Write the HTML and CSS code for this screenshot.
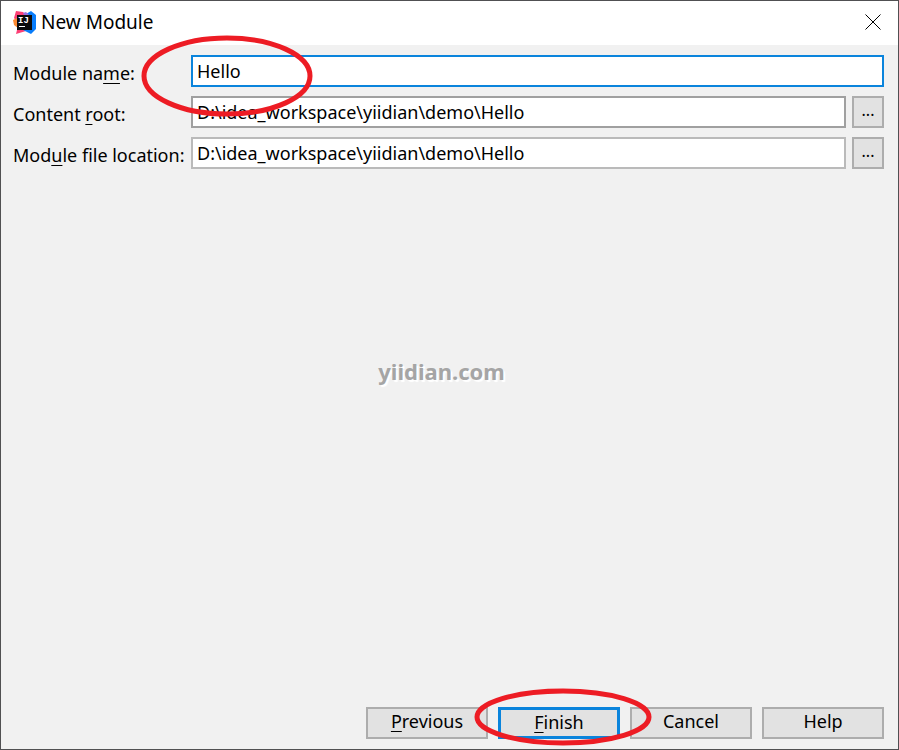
FILE: index.html
```html
<!DOCTYPE html>
<html lang="en">

<head>
    <meta charset="UTF-8">
    <meta name="viewport" content="width=device-width, initial-scale=1.0">
    <title>New Module</title>
    <link rel="stylesheet" href="styles.css">
</head>

<body>
    <div class="dialog">
        <header class="title-bar">
            <svg class="app-icon" viewBox="0 0 24 24" aria-hidden="true">
                <path fill="#fc3f75" d="M3 1l7 1 3 3-8 8-4-5z" />
                <path fill="#fb8a32" d="M0 10l4-2 4 4-2 7-5-4z" />
                <path fill="#fc3f75" d="M3 24l2-8h8v5z" />
                <path fill="#087cfa" d="M13 4l5-3 5 4v14l-5 5-8-4z" />
                <path fill="#9b6cdb" d="M10 3l3-1 3 3h-5z" />
                <rect x="4" y="5" width="15" height="15" fill="#0b0b0b" />
                <text class="app-icon-text" x="5" y="13">IJ</text>
                <path fill="#fff" d="M6 16h6v1H6z" />
            </svg>
            <h1 class="title">New Module</h1>
            <button class="close-button" type="button" aria-label="Close">
                <svg class="close-icon" viewBox="0 0 16 16" aria-hidden="true">
                    <path fill="none" stroke="#000" d="M.5.5l15 15M15.5.5l-15 15" />
                </svg>
            </button>
        </header>

        <form class="content">
            <div class="fields">
                <label class="field-label" for="module-name">Module na<u>m</u>e:</label>
                <div class="field">
                    <input class="text-input text-input-active" id="module-name" type="text" value="Hello">
                    <svg class="mark mark-name" viewBox="0 0 172 84" aria-hidden="true">
                        <ellipse cx="86" cy="42" rx="83" ry="38" />
                    </svg>
                </div>

                <label class="field-label" for="content-root">Content <u>r</u>oot:</label>
                <div class="field">
                    <input class="text-input text-input-root" id="content-root" type="text" value="D:\idea_workspace\yiidian\demo\Hello">
                    <button class="button browse-button" type="button" aria-label="Browse content root">...</button>
                </div>

                <label class="field-label" for="file-location">Mod<u>u</u>le file location:</label>
                <div class="field">
                    <input class="text-input" id="file-location" type="text" value="D:\idea_workspace\yiidian\demo\Hello">
                    <button class="button browse-button" type="button" aria-label="Browse module file location">...</button>
                </div>
            </div>

            <div class="actions">
                <button class="button" type="button"><u>P</u>revious</button>
                <div class="finish">
                    <button class="button button-default" type="submit"><u>F</u>inish</button>
                    <svg class="mark mark-finish" viewBox="0 0 178 60" aria-hidden="true">
                        <ellipse cx="89" cy="30" rx="86" ry="26" />
                    </svg>
                </div>
                <button class="button" type="button">Cancel</button>
                <button class="button" type="button">Help</button>
            </div>
        </form>

        <div class="watermark">yiidian.com</div>
    </div>
</body>

</html>
```

FILE: styles.css
```css
* {
    box-sizing: border-box;
}

body {
    margin: 0;
    font-family: "Noto Sans", "Open Sans", sans-serif;
    font-size: 18px;
    line-height: 24px;
    color: #000;
}

.dialog {
    position: relative;
    display: flex;
    flex-direction: column;
    min-height: 100vh;
    border: 1px solid #505052;
    background-color: #f1f1f1;
}

.title-bar {
    display: flex;
    align-items: center;
    height: 44px;
    padding: 0 17px 2px 12px;
    background-color: #fff;
}

.app-icon {
    width: 24px;
    height: 24px;
}

.app-icon-text {
    font-family: "Liberation Mono", monospace;
    font-size: 9px;
    font-weight: bold;
    fill: #fff;
}

.title {
    flex: 1;
    margin: 0 0 0 4px;
    font-size: 19px;
    font-weight: normal;
}

.close-button {
    display: flex;
    padding: 0;
    border: none;
    background: none;
}

.close-icon {
    width: 16px;
    height: 16px;
}

.content {
    flex: 1;
    display: flex;
    flex-direction: column;
    justify-content: space-between;
    padding: 10px 14px 10px 12px;
}

.fields {
    display: grid;
    grid-template-columns: 178px 1fr;
    row-gap: 9px;
}

.field-label {
    padding-top: 6px;
    white-space: nowrap;
}

.field {
    position: relative;
    display: flex;
    gap: 6px;
}

.text-input {
    flex: 1;
    min-width: 0;
    height: 32px;
    padding: 0 4px;
    border: 2px solid #bababa;
    background-color: #fff;
    color: #000;
    font: inherit;
    outline: none;
}

.text-input-root {
    border-color: #a0a0a0;
}

.text-input-active {
    border-color: #0a84dc;
}

.button {
    width: 122px;
    height: 32px;
    padding: 0 0 4px;
    border: 2px solid #adadad;
    background-color: #e2e2e2;
    color: #000;
    font: inherit;
}

.button-default {
    border: 3px solid #0a84dc;
}

.browse-button {
    width: 32px;
    font-size: 16px;
}

.actions {
    display: flex;
    justify-content: flex-end;
    gap: 10px;
}

.finish {
    position: relative;
}

u {
    text-decoration-thickness: 1px;
    text-underline-offset: 3px;
}

/* Red rings around the name field and the Finish button */
.mark {
    position: absolute;
    z-index: 1;
    fill: none;
    stroke: #ed1c24;
    stroke-width: 5px;
    pointer-events: none;
}

.mark-name {
    top: -21px;
    left: -50px;
    width: 172px;
    height: 84px;
}

.mark-finish {
    top: -20px;
    left: -24px;
    width: 178px;
    height: 60px;
}

.watermark {
    position: absolute;
    top: 354px;
    left: 0;
    right: 16px;
    text-align: center;
    font-family: "Comic Sans MS", "Noto Sans", sans-serif;
    font-size: 22px;
    font-weight: bold;
    line-height: 32px;
    color: #a5a5a5;
    text-shadow: 2px 2px 1px #fff;
    pointer-events: none;
}
```
